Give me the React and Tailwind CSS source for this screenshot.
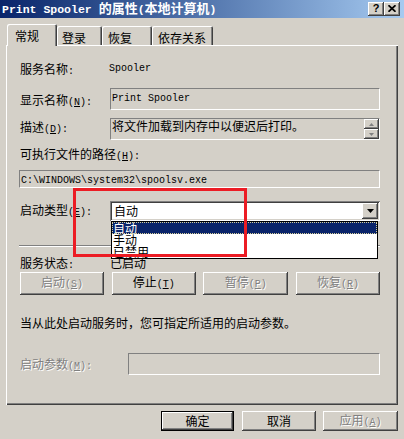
import React from "react";

const raised =
  "bg-[#d4d0c8] shadow-[inset_-1px_-1px_0_#404040,inset_1px_1px_0_#ffffff,inset_-2px_-2px_0_#808080,inset_2px_2px_0_#d4d0c8]";
const sunken =
  "shadow-[inset_1px_1px_0_#808080,inset_-1px_-1px_0_#ffffff,inset_2px_2px_0_#404040,inset_-2px_-2px_0_#d4d0c8]";
const flat = "border border-t-[#808080] border-l-[#808080] border-b-white border-r-white bg-[#d4d0c8]";
const dis = "text-[#808080] [text-shadow:1px_1px_0_#ffffff]";

function M({ children, className = "" }) {
  return <span className={"font-['Liberation_Mono',monospace] text-[10px] " + className}>{children}</span>;
}

function Lbl({ t, k }) {
  return (
    <span className="whitespace-nowrap">
      {t}
      {k ? (
        <M>
          (<u>{k}</u>):
        </M>
      ) : (
        <M>:</M>
      )}
    </span>
  );
}

function Btn({ t, k, disabled, className = "" }) {
  return (
    <div className={"h-[23px] flex items-center justify-center " + raised + " " + className}>
      <span className={disabled ? dis : ""}>
        {t}
        <M>
          (<u>{k}</u>)
        </M>
      </span>
    </div>
  );
}

function Tab({ children, w }) {
  return (
    <div
      className={
        "h-[19px] rounded-t-[2px] pt-[6px] shadow-[inset_1px_1px_0_#ffffff,inset_-1px_0_0_#404040,inset_-2px_0_0_#808080] " +
        w
      }
    >
      {children}
    </div>
  );
}

export default function App() {
  return (
    <div className="w-[404px] h-[439px] bg-[#d4d0c8] relative overflow-hidden font-['Noto_Sans_CJK_SC',sans-serif] text-[12px] leading-[12px] text-black select-none">
      {/* Title bar */}
      <div className="h-[18px] flex items-center bg-linear-to-r from-[#0a246a] to-[#a6caf0] pl-[2px] pr-[4px]">
        <div className="flex-1 text-white font-bold whitespace-nowrap leading-[14px]">
          <span className="font-['Liberation_Mono',monospace] text-[11.5px]">Print Spooler </span>
          <span className="text-[13px]">的属性</span>
          <span className="font-['Liberation_Mono',monospace] text-[11.5px]">(</span>
          <span className="text-[13px]">本地计算机</span>
          <span className="font-['Liberation_Mono',monospace] text-[11.5px]">)</span>
        </div>
        <div className="flex">
          <div className={"w-[16px] h-[14px] flex items-center justify-center " + raised}>
            <span className="font-['Liberation_Sans',sans-serif] font-bold text-[11px] leading-[11px] -mt-[1px]">?</span>
          </div>
          <div className={"w-[16px] h-[14px] flex items-center justify-center " + raised}>
            <svg width="8" height="7" viewBox="0 0 8 7" className="-mt-[1px]">
              <path d="M0.5 0.2 L7.5 6.8 M7.5 0.2 L0.5 6.8" stroke="#000" strokeWidth="1.7" fill="none" />
            </svg>
          </div>
        </div>
      </div>

      {/* Tabs */}
      <div className="mt-[6px] ml-[7px] flex items-end h-[21px]">
        <div className="relative z-10 w-[50px] h-[22px] -mb-[1px] bg-[#d4d0c8] rounded-t-[2px] pl-[8px] pt-[6px] shadow-[inset_1px_1px_0_#ffffff,inset_-1px_0_0_#404040,inset_-2px_0_0_#808080]">
          常规
        </div>
        <Tab w="w-[45px] pl-[5px]">登录</Tab>
        <Tab w="w-[50px] pl-[6px]">恢复</Tab>
        <Tab w="w-[61px] pl-[6px]">依存关系</Tab>
      </div>

      {/* Panel */}
      <div className="ml-[6px] w-[392px] h-[360px] pl-[13px] pr-[18px] pt-[1px] flex flex-col shadow-[inset_1px_1px_0_#ffffff,inset_-1px_-1px_0_#404040,inset_-2px_-2px_0_#808080]">
        <div className="mt-[17px] h-[12px] flex">
          <div className="w-[90px] pl-[1px]">
            <Lbl t="服务名称" />
          </div>
          <M>Spooler</M>
        </div>

        <div className="mt-[13px] h-[22px] flex">
          <div className="w-[91px] pl-[1px] pt-[6px]">
            <Lbl t="显示名称" k="N" />
          </div>
          <div className={"flex-1 pl-[1px] pt-[1px] " + flat}>
            <M>Print Spooler</M>
          </div>
        </div>

        <div className="mt-[8px] h-[22px] flex">
          <div className="w-[91px] pl-[1px] pt-[3px]">
            <Lbl t="描述" k="D" />
          </div>
          <div className={"flex-1 flex " + flat}>
            <div className="flex-1 pl-[1px] pt-[1px] whitespace-nowrap">将文件加载到内存中以便迟后打印。</div>
            <div className="w-[15px] flex flex-col">
              <div className={"h-[10px] flex items-center justify-center " + raised}>
                <svg width="5" height="3" viewBox="0 0 5 3">
                  <polygon points="2.5,0 5,3 0,3" fill="#808080" />
                </svg>
              </div>
              <div className={"h-[10px] flex items-center justify-center " + raised}>
                <svg width="5" height="3" viewBox="0 0 5 3">
                  <polygon points="0,0 5,0 2.5,3" fill="#808080" />
                </svg>
              </div>
            </div>
          </div>
        </div>

        <div className="mt-[8px] h-[12px] pl-[1px]">
          <Lbl t="可执行文件的路径" k="H" />
        </div>

        <div className={"mt-[10px] h-[18px] pl-[1px] pt-[1px] " + flat}>
          <M>C:\WINDOWS\system32\spoolsv.exe</M>
        </div>

        <div className="mt-[13px] h-[20px] flex items-center">
          <div className="w-[91px] pl-[1px]">
            <Lbl t="启动类型" k="E" />
          </div>
          <div className={"flex-1 h-[20px] bg-white flex items-center pl-[4px] pr-[2px] " + sunken}>
            <div className="flex-1">自动</div>
            <div className={"w-[16px] h-[16px] flex items-center justify-center " + raised}>
              <svg width="7" height="4" viewBox="0 0 7 4">
                <polygon points="0,0 7,0 3.5,4" fill="#000" />
              </svg>
            </div>
          </div>
        </div>

        <div className="mt-[24px] h-[2px] border-t border-b border-t-[#808080] border-b-white" />

        <div className="mt-[10px] h-[12px] flex">
          <div className="w-[91px] pl-[1px]">
            <Lbl t="服务状态" />
          </div>
          <span>已启动</span>
        </div>

        <div className="mt-[3px] h-[23px] flex justify-between pl-[1px]">
          <Btn t="启动" k="S" disabled className="w-[84px]" />
          <Btn t="停止" k="T" className="w-[84px]" />
          <Btn t="暂停" k="P" disabled className="w-[85px]" />
          <Btn t="恢复" k="R" disabled className="w-[84px]" />
        </div>

        <div className="mt-[22px] h-[12px] pl-[1px] whitespace-nowrap">当从此处启动服务时，您可指定所适用的启动参数。</div>

        <div className="mt-[24px] h-[22px] flex">
          <div className={"w-[109px] pl-[1px] pt-[5px] " + dis}>
            <Lbl t="启动参数" k="M" />
          </div>
          <div className={"flex-1 " + flat} />
        </div>
      </div>

      {/* Bottom buttons */}
      <div className="mt-[6px] flex pl-[161px]">
        <div className="w-[73px] h-[20px] border border-black">
          <div className={"w-full h-full flex items-center justify-center " + raised}>确定</div>
        </div>
        <div className={"ml-[8px] w-[74px] h-[20px] flex items-center justify-center " + raised}>取消</div>
        <div className={"ml-[7px] w-[75px] h-[20px] flex items-center justify-center " + raised}>
          <span className={dis}>
            应用
            <M>
              (<u>A</u>)
            </M>
          </span>
        </div>
      </div>

      {/* Dropdown list overlay */}
      <div className="absolute left-[111px] top-[221px] w-[267px] h-[38px] bg-white border border-black overflow-hidden z-20">
        <div className="h-[12px] bg-[#0a246a] text-white pl-[1px] outline-1 outline-dotted outline-[#d7cf9a] -outline-offset-1">
          自动
        </div>
        <div className="h-[12px] pl-[1px]">手动</div>
        <div className="h-[12px] pl-[1px]">已禁用</div>
      </div>

      {/* Red annotation rectangle */}
      <div className="absolute left-[73px] top-[188px] w-[174px] h-[69px] border-[3px] border-[#ec1c24] z-30" />
    </div>
  );
}
